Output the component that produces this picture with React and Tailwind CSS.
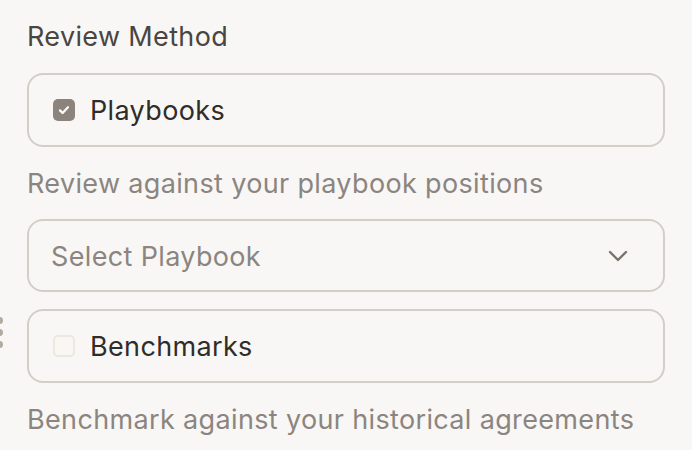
import React from 'react';

const font = { fontFamily: 'Inter, "Noto Sans", sans-serif' };

const Check = ({ checked }) =>
    checked ? (
        <span className="w-[22px] h-[22px] rounded-[5px] bg-[#8b837c] flex items-center justify-center shrink-0">
            <svg width="14" height="14" viewBox="0 0 14 14" fill="none">
                <path d="M3 7.4l2.6 2.6L11 4.2" stroke="#fff" strokeWidth="2.2" strokeLinecap="round" strokeLinejoin="round" />
            </svg>
        </span>
    ) : (
        <span className="w-[22px] h-[22px] rounded-[5px] border-2 border-[#ebe8de] bg-[#f8f7f4] shrink-0" />
    );

export default function App() {
    return (
        <div className="w-[692px] h-[450px] bg-[#f8f7f5] overflow-hidden relative pl-[27px] text-[27px] tracking-[0.35px]" style={font}>
            <div className="w-[638px]">
                <h3 className="mt-[19px] h-[36px] leading-[36px] text-[#4a4540] font-normal">
                    Review Method
                </h3>

                <label className="mt-[18px] h-[74px] rounded-[16px] border-2 border-[#d4cec8] flex items-center pl-[24px] gap-[15px]">
                    <Check checked />
                    <span className="text-[#302c29] pt-[2px]">Playbooks</span>
                </label>

                <p className="mt-[19px] h-[36px] leading-[36px] text-[#8c857f]">
                    Review against your playbook positions
                </p>

                <button className="mt-[17px] w-full h-[73px] rounded-[16px] border-2 border-[#d4cec8] flex items-center justify-between pl-[22px] pr-[35px]">
                    <span className="text-[#8c857f] pt-[3px]">Select Playbook</span>
                    <svg width="20" height="12" viewBox="0 0 20 12" fill="none">
                        <path d="M2 2l8 8 8-8" stroke="#7a736d" strokeWidth="2.4" strokeLinecap="round" strokeLinejoin="round" />
                    </svg>
                </button>

                <div className="relative mt-[17px]">
                    <div className="absolute left-[-31px] top-[8px] flex flex-col gap-[5px]">
                        <span className="w-[7px] h-[7px] rounded-full bg-[#b3ab9f]" />
                        <span className="w-[7px] h-[7px] rounded-full bg-[#b3ab9f]" />
                        <span className="w-[7px] h-[7px] rounded-full bg-[#b3ab9f]" />
                    </div>
                    <label className="h-[74px] rounded-[16px] border-2 border-[#d4cec8] flex items-center pl-[24px] gap-[15px]">
                        <Check />
                        <span className="text-[#302c29] pt-[2px]">Benchmarks</span>
                    </label>
                </div>

                <p className="mt-[19px] h-[36px] leading-[36px] text-[#8c857f]">
                    Benchmark against your historical agreements
                </p>
            </div>
        </div>
    );
}
